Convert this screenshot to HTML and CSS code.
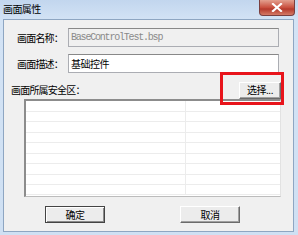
FILE: index.html
```html
<!DOCTYPE html>
<html>
<head>
<meta charset="utf-8">
<link rel="stylesheet" href="styles.css">
</head>
<body>
<div class="window">
  <div class="titlebar">
    <span class="title">画面属性</span>
    <span class="close"><svg width="12" height="9" viewBox="0 0 12 9"><path d="M2 1 L10 8 M10 1 L2 8" stroke="#fff" stroke-width="2.2" stroke-linecap="square"/></svg></span>
  </div>
  <div class="client">
    <div class="row row1">
      <span class="label">画面名称：</span>
      <div class="input readonly">BaseControlTest.bsp</div>
    </div>
    <div class="row row2">
      <span class="label">画面描述：</span>
      <div class="input">基础控件</div>
    </div>
    <div class="row row3">
      <span class="label">画面所属安全区：</span>
      <div class="selwrap">
        <button class="btn sel">选择...</button>
        <div class="highlight"></div>
      </div>
    </div>
    <div class="list">
      <div class="lrow"><span class="c1"></span><span class="c2"></span></div>
      <div class="lrow"><span class="c1"></span><span class="c2"></span></div>
      <div class="lrow"><span class="c1"></span><span class="c2"></span></div>
      <div class="lrow"><span class="c1"></span><span class="c2"></span></div>
      <div class="lrow"><span class="c1"></span><span class="c2"></span></div>
      <div class="lrow"><span class="c1"></span><span class="c2"></span></div>
      <div class="lrow"><span class="c1"></span><span class="c2"></span></div>
      <div class="lrow"><span class="c1"></span><span class="c2"></span></div>
      <div class="lrow"><span class="c1"></span><span class="c2"></span></div>
    </div>
    <div class="buttons">
      <button class="btn ok">确定</button>
      <button class="btn cancel">取消</button>
    </div>
  </div>
</div>
</body>
</html>
```
FILE: styles.css
```css
html, body {
  margin: 0;
  padding: 0;
  background: #c9dcf1;
}
.window {
  width: 298px;
  height: 235px;
  box-sizing: border-box;
  background: linear-gradient(#c2d6ee, #d3e3f5 20px, #cfe0f3);
  display: flex;
  flex-direction: column;
  font-family: "Noto Sans CJK SC", sans-serif;
  font-size: 10px;
  color: #000;
}
.titlebar {
  height: 19px;
  display: flex;
  justify-content: space-between;
  align-items: flex-start;
  padding-left: 3px;
}
.title {
  margin-top: 3px;
  line-height: 12px;
  letter-spacing: -0.6px;
}
.close {
  width: 36px;
  height: 16px;
  margin-right: 3px;
  box-sizing: border-box;
  border: 1px solid #7a3f3f;
  border-top: none;
  border-radius: 0 0 4px 4px;
  background: linear-gradient(#e3a08f, #c9503f 50%, #b53a2c 60%, #d47a66);
  display: flex;
  align-items: center;
  justify-content: center;
}
.client {
  margin: 0 4px 3px 3px;
  flex: 1;
  background: #f0f0f0;
  border: 1px solid #8ea6c2;
  position: relative;
  display: flex;
  flex-direction: column;
}
.row {
  display: flex;
  align-items: center;
}
.row1 {
  margin-top: 8px;
  padding-left: 13px;
}
.row2 {
  margin-top: 7px;
  padding-left: 13px;
}
.label {
  letter-spacing: -0.8px;
  line-height: 12px;
  width: 51px;
}
.input {
  width: 211px;
  height: 19px;
  box-sizing: border-box;
  border: 1px solid #abadb3;
  border-top-color: #888;
  background: #fff;
  display: flex;
  align-items: center;
  padding-left: 2px;
  letter-spacing: -0.5px;
  line-height: 12px;
}
.input.readonly {
  background: #f0f0f0;
  color: #8a8a8a;
  font-family: "Liberation Mono", monospace;
  font-size: 10px;
  letter-spacing: -1.2px;
}
.row3 {
  margin-top: 8px;
  padding-left: 7px;
  justify-content: space-between;
  padding-right: 12px;
  height: 18px;
}
.row3 .label {
  width: auto;
}
.selwrap {
  position: relative;
}
.btn {
  font-family: "Noto Sans CJK SC", sans-serif;
  font-size: 10px;
  letter-spacing: -0.5px;
  color: #000;
  background: #ececec;
  box-sizing: border-box;
  padding: 0;
  margin: 0;
  line-height: 12px;
  border: 1px solid;
  border-color: #fff #6b6b6b #6b6b6b #fff;
  box-shadow: inset -1px -1px 0 #a0a0a0;
}
.sel {
  width: 42px;
  height: 17px;
  display: block;
}
.highlight {
  position: absolute;
  left: -19px;
  top: -10px;
  width: 64px;
  height: 33px;
  box-sizing: border-box;
  border: 3px solid #e8141b;
}
.list {
  margin-left: 20px;
  width: 257px;
  height: 98px;
  box-sizing: border-box;
  background: #fff;
  border-top: 2px solid #8c8c8c;
  border-left: 2px solid #8c8c8c;
  border-right: 1px solid #e2e2e2;
  border-bottom: 1px solid #bcbcbc;
  display: flex;
  flex-direction: column;
  overflow: hidden;
}
.lrow {
  display: flex;
  height: 10.43px;
  flex-shrink: 0;
  border-bottom: 1px solid #ececec;
  box-sizing: border-box;
}
.lrow:first-child {
  height: 11px;
}
.c1 {
  width: 159px;
  border-right: 1px solid #ececec;
}
.c2 {
  flex: 1;
}
.buttons {
  display: flex;
  margin-top: 9px;
  padding-left: 41px;
  gap: 75px;
}
.ok, .cancel {
  width: 60px;
  height: 17px;
}
.ok {
  border-color: #444;
  box-shadow: inset 1px 1px 0 #fff, inset -1px -1px 0 #8a8a8a;
}
```
